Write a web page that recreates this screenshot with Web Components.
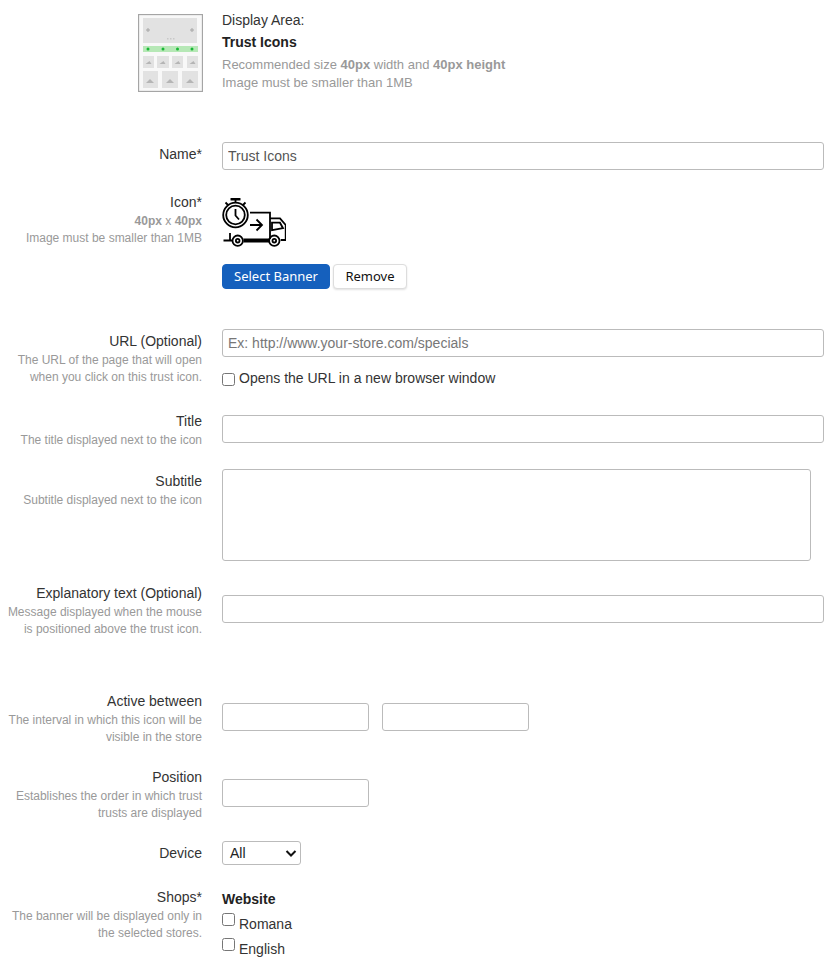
<!DOCTYPE html>
<html><head><meta charset="utf-8">
<style>
html,body{margin:0;background:#fff}
body{font:14px/20px "Liberation Sans",Arial,sans-serif;color:#333;height:969px;overflow:hidden}
trust-form{padding-top:14px}
</style></head><body>
<template id="row-t">
<style>
:host{display:grid;grid-template-columns:202px 602px;column-gap:20px;margin-bottom:var(--mb,0)}
.l{text-align:right;margin-top:var(--lt,0)}
.t{font-size:14px;line-height:20px;color:#333}
.h{font-size:12px;line-height:16.800px;color:#999;margin-top:1px}
</style>
<div class="l"><div class="t"></div><div class="h"><slot name="hint"></slot></div></div>
<div class="c"><slot></slot></div>
</template>
<template id="input-t">
<style>
:host{display:block;width:var(--w,602px)}
input,textarea{display:block;box-sizing:border-box;width:100%;height:var(--h,28px);border:1px solid #bbb;border-radius:3px;padding:0 5px;margin:0;font:14px "Liberation Sans",Arial,sans-serif;color:#555;background:#fff;resize:none;outline:0}
input::placeholder{color:#777;opacity:1}
</style><input>
</template>
<template id="check-t">
<style>
:host{display:flex;align-items:flex-start;font-size:14px;line-height:20px;color:#333}
.b{box-sizing:border-box;width:13px;height:13px;border:1px solid #767676;border-radius:2.500px;background:#fff;margin:var(--bt,5px) 4px 0 0;flex:none}
</style><span class="b" role="checkbox"></span><span><slot></slot></span>
</template>
<template id="btn-t">
<style>
:host{display:inline-block;box-sizing:border-box;height:25px;border-radius:4px;font:13px/23px "Noto Sans","Open Sans",sans-serif;text-align:center;border:1px solid var(--bd);background:var(--bg);color:var(--fg);box-shadow:var(--sh,none)}
</style><slot></slot>
</template>
<template id="sel-t">
<style>
:host{display:flex;align-items:center;box-sizing:border-box;width:79px;height:24px;border:1px solid #bbb;border-radius:3px;padding-left:7px;font-size:14px;color:#222;position:relative;background:#fff}
svg{position:absolute;right:3px;top:7px}
</style><slot></slot><svg width="12" height="9" viewBox="0 0 12 9"><path d="M1.500 2l4.500 4.500L10.500 2" fill="none" stroke="#111" stroke-width="2"/></svg>
</template>
<template id="thumb-t">
<style>:host{display:block;width:65px;height:78px}svg{display:block;filter:blur(.45px)}</style>
<svg width="65" height="78" viewBox="0 0 65 78">
<rect x=".5" y=".5" width="64" height="77" fill="#f8f8f8" stroke="#a5a5a5" stroke-width="1.300"/>
<rect x="5" y="4" width="54" height="25" fill="#e2e2e2"/>
<g fill="#b5b5b5"><path d="M10 14v4M8 16h4M54 14v4M52 16h4" stroke="#b5b5b5"/><circle cx="10" cy="16" r="1.500"/><circle cx="54" cy="16" r="1.500"/></g>
<g fill="#c8c8c8"><rect x="29" y="24" width="1.500" height="1.500"/><rect x="32" y="24" width="1.500" height="1.500"/><rect x="35" y="24" width="1.500" height="1.500"/></g>
<rect x="5" y="32" width="55" height="6" fill="#b6e8b6"/>
<g fill="#18b835"><circle cx="10" cy="35" r="1.500"/><circle cx="25" cy="35" r="1.500"/><circle cx="39.500" cy="35" r="1.500"/><circle cx="54" cy="35" r="1.500"/></g>
<g fill="#e2e2e2"><rect x="5" y="42" width="11" height="12"/><rect x="19" y="42" width="12" height="12"/><rect x="34" y="42" width="11" height="12"/><rect x="49" y="42" width="11" height="12"/>
<rect x="5" y="57" width="15" height="17"/><rect x="24" y="57" width="16" height="17"/><rect x="44" y="57" width="16" height="17"/></g>
<g fill="#b5b5b5"><path d="M7.500 50l4-3 2 3zM21.500 50l4-3 2 3zM36.500 50l4-3 2 3zM51.500 50l4-3 2 3z"/><path d="M8 69l4-4 4 4zM28 69l4-4 4 4zM48 69l4-4 4 4z"/></g>
</svg>
</template>
<template id="truck-t">
<style>:host{display:block;width:64px;height:50px}svg{display:block}</style>
<svg width="64" height="50" viewBox="0 0 64 50" fill="none" stroke="#000" stroke-width="1.800">
<rect x="8.500" y="1" width="10" height="2.500" rx=".5" fill="#000" stroke="none"/><path d="M13.500 3v3M3.500 5.500l2.500 2.500M23.500 5.500L21 8"/>
<circle cx="13.500" cy="18" r="12.300"/><circle cx="13.500" cy="18" r="9.300"/><path d="M13.500 12v6.500l3.500 4"/>
<path d="M28 15.700h20V42M28 28h12M34.500 22.500L40 28l-5.500 5.500"/>
<path d="M48 21.300h10l5.700 6.700v15h-5M50 25.700h8l3 5.500-11 2z"/>
<path d="M8 36v7.500h2.500M1.500 43.500H8M21.500 42.500H47M21.500 44.500H47" />
<circle cx="15.700" cy="43.700" r="5.200"/><circle cx="15.700" cy="43.700" r="1.800"/><circle cx="52.300" cy="43.700" r="5.200"/><circle cx="52.300" cy="43.700" r="1.800"/>
</svg>
</template>
<template id="form-t">
<style>
:host{display:block}
.top{display:grid;grid-template-columns:65px auto;column-gap:19px;padding-left:138px;height:128px}
.tx{margin-top:-5px;font-size:14px;line-height:22px;color:#333}
.g{font-size:13px;line-height:18px;color:#999}
.g1{margin-top:3px}
.actions{display:flex;gap:3px;margin-top:17px}
.dates{display:flex;gap:13px}
.web{font-weight:bold;color:#222;line-height:20px;margin-top:2px}
</style>
<div class="top"><trust-thumb></trust-thumb><div class="tx"><div>Display Area:</div><div><b style="color:#222">Trust Icons</b></div><div class="g g1">Recommended size <b>40px</b> width and <b>40px height</b></div><div class="g">Image must be smaller than 1MB</div></div></div>

<form-row label="Name*" style="--lt:2px;--mb:27px;height:28px"><text-field value="Trust Icons"></text-field></form-row>
<form-row label="Icon*" style="--lt:-5px;height:92px;--mb:40px"><span slot="hint"><b>40px</b> x <b>40px</b><br>Image must be smaller than 1MB</span>
 <truck-icon></truck-icon><div class="actions"><ui-button style="--bd:#1560bd;--bg:#1560bd;--fg:#fff;width:108px">Select Banner</ui-button><ui-button style="--bd:#ddd;--bg:#fff;--fg:#111;--sh:0 1px 2px rgba(0,0,0,.12);width:74px">Remove</ui-button></div></form-row>
<form-row label="URL (Optional)" style="--lt:2px;height:58px;--mb:28px"><span slot="hint">The URL of the page that will open<br>when you click on this trust icon.</span>
 <text-field placeholder="Ex: http://www.your-store.com/specials"></text-field><check-box style="margin-top:11px">Opens the URL in a new browser window</check-box></form-row>
<form-row label="Title" style="--lt:-4px;height:28px;--mb:26px"><span slot="hint">The title displayed next to the icon</span><text-field></text-field></form-row>
<form-row label="Subtitle" style="--lt:2px;height:92px;--mb:34px"><span slot="hint">Subtitle displayed next to the icon</span><text-field area style="--w:589px;--h:92px"></text-field></form-row>
<form-row label="Explanatory text (Optional)" style="--lt:-12px;height:28px;--mb:80px"><span slot="hint">Message displayed when the mouse<br>is positioned above the trust icon.</span><text-field></text-field></form-row>
<form-row label="Active between" style="--lt:-12px;height:28px;--mb:48px"><span slot="hint">The interval in which this icon will be<br>visible in the store</span><div class="dates"><text-field style="--w:147px"></text-field><text-field style="--w:147px"></text-field></div></form-row>
<form-row label="Position" style="--lt:-12px;height:28px;--mb:34px"><span slot="hint">Establishes the order in which trust<br>trusts are displayed</span><text-field style="--w:147px"></text-field></form-row>
<form-row label="Device" style="--lt:2px;height:24px;--mb:22px"><select-box>All</select-box></form-row>
<form-row label="Shops*" style="--lt:0px;height:80px"><span slot="hint">The banner will be displayed only in<br>the selected stores.</span>
 <div class="web">Website</div><check-box style="margin-top:5px;--bt:-1px">Romana</check-box><check-box style="margin-top:5px;--bt:-1px">English</check-box></form-row>
</template>
<trust-form></trust-form>
<script>
const mk=(n,t,f)=>customElements.define(n,class extends HTMLElement{constructor(){super();this.attachShadow({mode:'open'}).appendChild(document.getElementById(t).content.cloneNode(true));}connectedCallback(){f&&f(this,this.shadowRoot)}});
mk('trust-thumb','thumb-t');mk('truck-icon','truck-t');mk('check-box','check-t');mk('ui-button','btn-t');mk('select-box','sel-t');
mk('form-row','row-t',(e,s)=>{s.querySelector('.t').textContent=e.getAttribute('label')});
mk('text-field','input-t',(e,s)=>{let i=s.querySelector('input');if(e.hasAttribute('area')){const a=document.createElement('textarea');i.replaceWith(a);return}
 if(e.hasAttribute('value'))i.value=e.getAttribute('value');if(e.hasAttribute('placeholder'))i.placeholder=e.getAttribute('placeholder')});
mk('trust-form','form-t');
</script>
</body></html>
